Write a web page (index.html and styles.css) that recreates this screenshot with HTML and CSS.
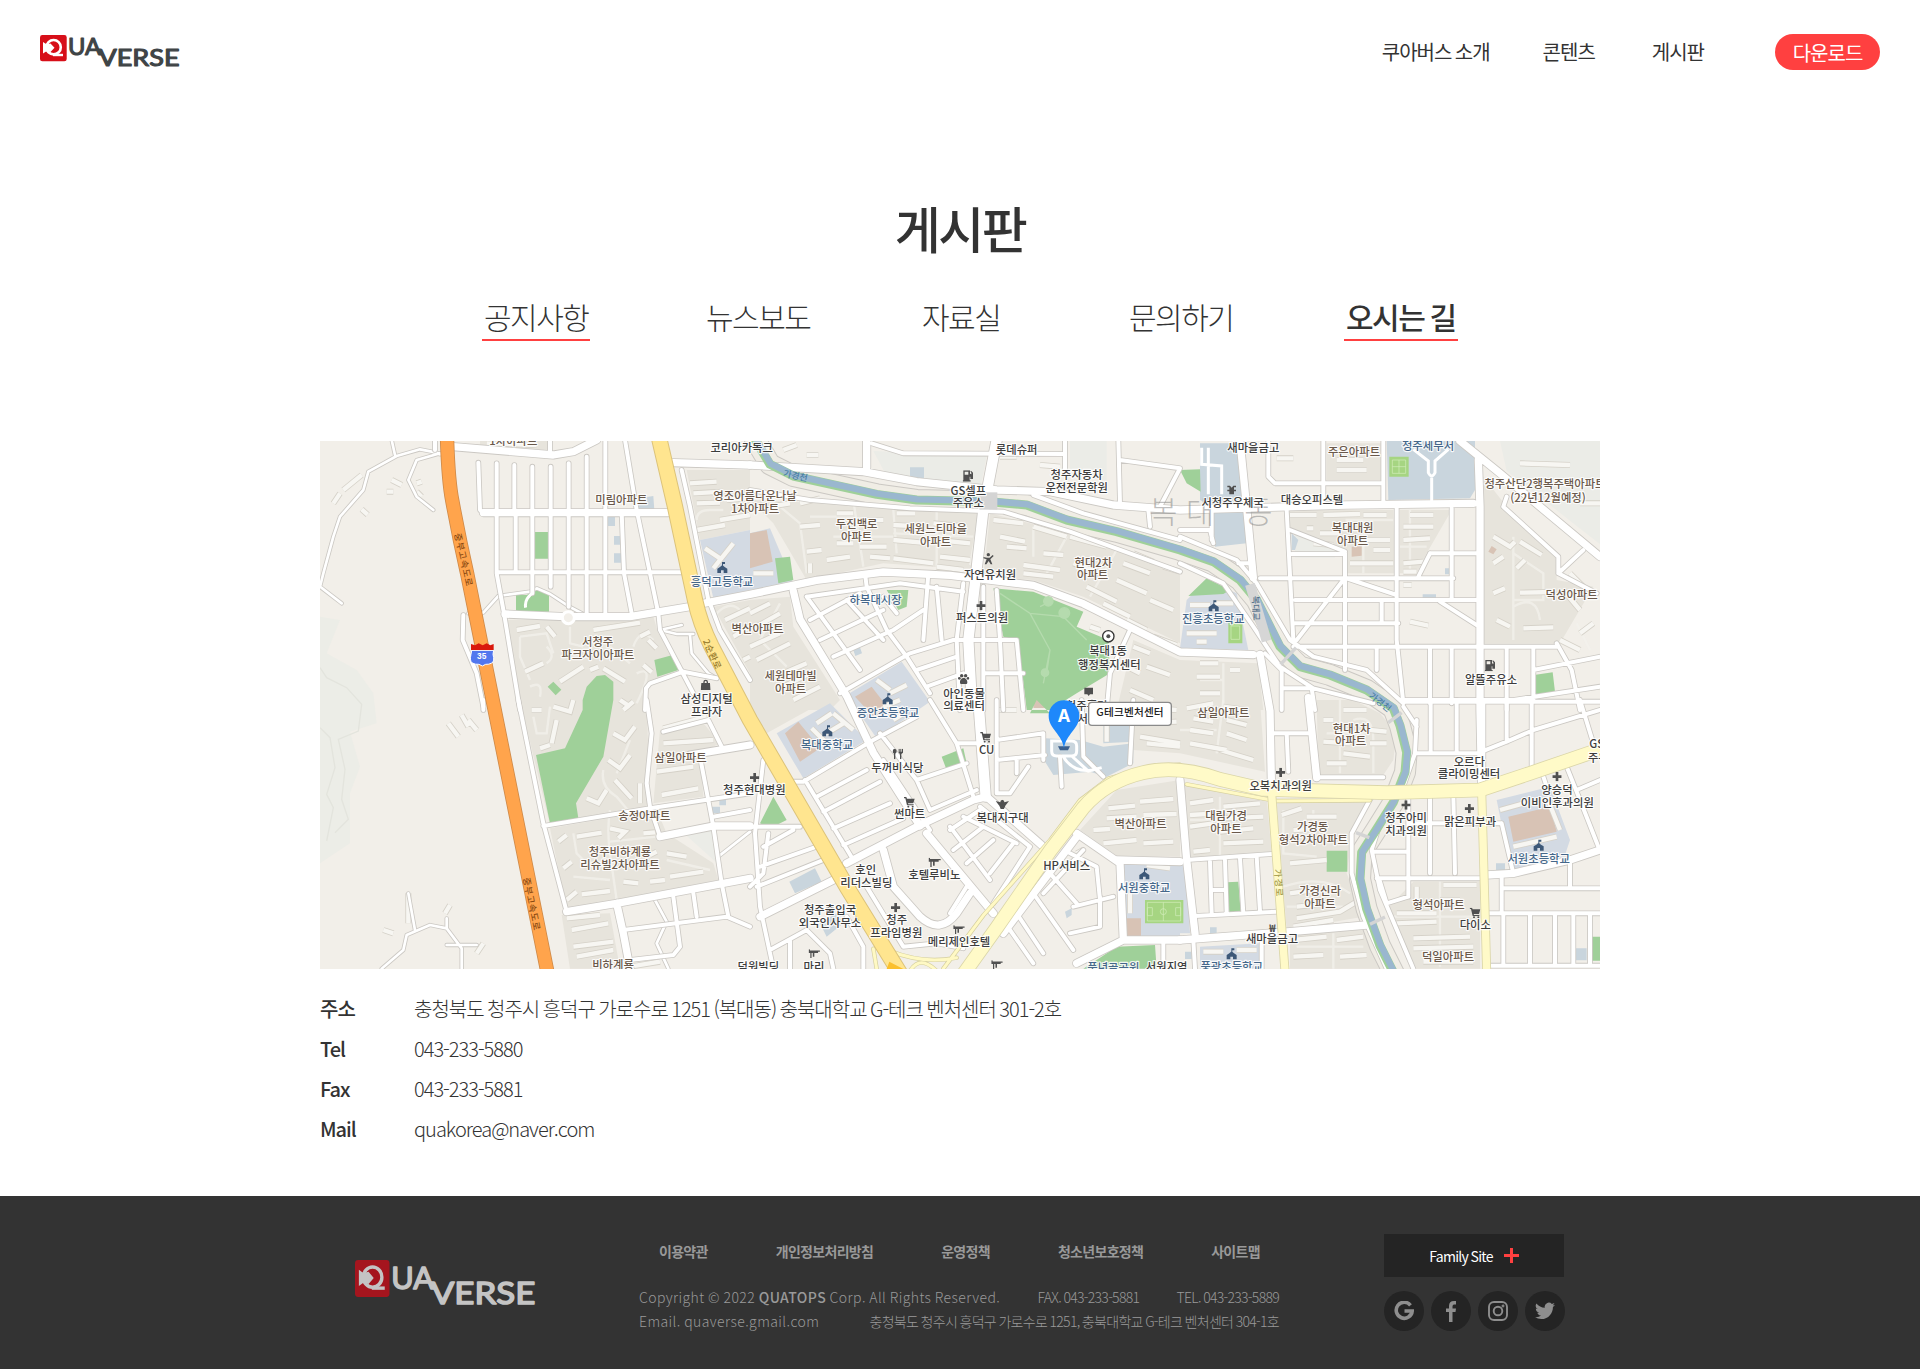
FILE: index.html
```html
<!DOCTYPE html>
<html lang="ko">
<head>
<meta charset="utf-8">
<title>QUAVERSE - 오시는 길</title>
<link rel="stylesheet" href="styles.css">
</head>
<body>
<svg class="sprite" aria-hidden="true">
  <symbol id="logo" viewBox="0 0 140 32" preserveAspectRatio="none">
    <rect class="logo-box" width="26.7" height="26.3" rx="2.4"/>
    <circle class="logo-ring" cx="13.6" cy="12.2" r="7.2"/>
    <path class="logo-line" d="M13 20h10"/>
    <path class="logo-fish" d="M3 7l3.500 2.200 4-.8 4 4.400-4 4.200-4-.8L3 18.500z"/>
    <text class="logo-text" x="28" y="20.300" textLength="33" lengthAdjust="spacingAndGlyphs">UA</text>
    <text class="logo-text" x="58.500" y="31.400" textLength="81" lengthAdjust="spacingAndGlyphs">VERSE</text>
  </symbol>
</svg>

<header class="header">
  <svg class="logo" width="140" height="32"><use href="#logo"/></svg>
  <nav class="gnb">
    <a class="gnb-intro">쿠아버스 소개</a>
    <a class="gnb-contents">콘텐츠</a>
    <a class="gnb-board">게시판</a>
    <a class="download">다운로드</a>
  </nav>
</header>

<main class="main">
  <h1 class="title">게시판</h1>
  <nav class="tabs">
    <a class="tab lined">공지사항</a>
    <a class="tab">뉴스보도</a>
    <a class="tab">자료실</a>
    <a class="tab">문의하기</a>
    <a class="tab lined current">오시는 길</a>
  </nav>

  <svg class="map" viewBox="0 0 3840 1584">
    <defs>
      <symbol id="school" viewBox="0 0 30 34" overflow="visible"><path d="M0 33V20l8-5 7-6 7 6 8 5v13H19v-8h-8v8zM14 0h9v6h-6v6h-3z"/></symbol>
      <symbol id="cross" viewBox="0 0 28 28"><path d="M10 0h8v10h10v8H18v10h-8V18H0v-8h10z"/></symbol>
      <symbol id="cart" viewBox="0 0 32 32"><path d="M0 0h7l2 5h23l-4 14H12l1 3h16v3H9L4 4H0z"/><circle cx="13" cy="29" r="3"/><circle cx="26" cy="29" r="3"/></symbol>
      <symbol id="fuel" viewBox="0 0 32 34"><path d="M2 0h20v10l4 2V7l-3-4 2-2 6 6v19h-8v-7h-2v11h3v4H0v-4h2zM6 4v9h11V4z" fill-rule="evenodd"/></symbol>
      <symbol id="bed" viewBox="0 0 36 28"><path d="M0 0h4v4h32v4h-6v4H18v12h-5V12H9v16H5V12H0z"/></symbol>
      <symbol id="bag" viewBox="0 0 30 32"><path d="M8 11V8a7 7 0 0 1 14 0v3h6l2 21H0l2-21zM12 11h6V8a3 3 0 0 0-6 0z" fill-rule="evenodd"/></symbol>
      <symbol id="paw" viewBox="0 0 34 32"><path d="M17 13c7 0 12 8 11 14s-8 4-11 4-10 2-11-4 4-14 11-14z"/><circle cx="11" cy="6" r="5"/><circle cx="23" cy="6" r="5"/><circle cx="4" cy="14" r="4"/><circle cx="30" cy="14" r="4"/></symbol>
      <symbol id="police" viewBox="0 0 40 30"><path d="M0 4l14 4 1-5 5-3 5 3 1 5 14-4-11 14-4 10h-10L11 18z"/></symbol>
      <symbol id="food" viewBox="0 0 32 32"><path d="M0 8a6 8 0 0 1 12 0c0 5-3 6-4 7v17H4V15C3 14 0 13 0 8zM18 0h3v9h2V0h3v9h2V0h3v12l-5 4v16h-4V16l-4-4z"/></symbol>
      <symbol id="people" viewBox="0 0 32 36"><circle cx="15" cy="5" r="5"/><path d="M0 12l11 2h8l9-8 3 3-10 10 6 15h-5l-6-10-7 10H4l6-15L0 16z"/></symbol>

      <g id="streets">
        <path transform="translate(0 -3)" d="M475 68l5 142 10 8h555M530 70v148M583 75v143M637 80v380M692 80v360M746 70v430M800 50v475M856 0v525M915 0l35 210 40 190 25 120M905 218l7 182 23 120M530 218v182l22 120 48 290M587 218v177M535 397h550M430 525l-2 75 42 100 20 100M1085 90l25 110 55 280M1015 520l5 50 100 190M1090 695l100 20M975 810l3-65 12-15 100-35M1170 490l30 80 90 150M345 0v30M690 0v40"/>
        <path transform="translate(1290 -3)" d="M365 10l95 30 480 2M945 0v90M1105 0l5 190M1110 60l180 25-60 115M1195 210l5 50M0 150l180 30 300 25 280 10 200 60 330 120M850 165l150 55 290 80M345 400l5 40 60 130 60 80 70 110M535 400l-15 200M640 430l-20 170 10 210M170 470l280-40 190 25M180 540l150-80M210 600l190-90M250 650l180-80 90-60M170 470l160 220M270 760l210-120 130-40h190M290 480l110 120M560 440l15 160M500 690l120-40M530 740l110-40M700 440v370M740 450l10 150 10 210M800 600l20 210M700 700h120M400 470l40 50M1140 570l-60 130-10 110"/>
        <path transform="translate(2580 -3)" d="M320 210l20 390M430 0v200M265 0v110l20 20h145M430 130h175M610 0v190M650 205v395l20 190M815 205v275M240 415h580M345 480h555M345 550h310M340 620h790M495 340v350M330 270l165 65M335 342h160M490 420L350 600M500 415l60 20 90 30M750 340l-35 70M750 340h140M605 480v70M780 485l110 70M590 620v70M750 620v170M815 620v170M980 620v190M1060 620v160M1060 690l200-40M1130 610l45 80 25 120M670 780h330l260-40M970 200l165 150v50l75-70M255 640l50 50v120M305 745h90l10 65M0 270h90l10 40M95 200v100M0 370l130 60 90 130 80 120 100 65 180 45M0 290l170 70 60 70 100 170 70 50 160 40 110 100M175 370h35M1135 400l115 60M970 200l10-30"/>
        <path transform="translate(0 777)" d="M595 0l75 370 70 265M670 378l320-53 300-45M980 0l15 100-15 150 10 70 30 90M1140 170l40 210 25 170 20 100M1165 60l45 90M1030 95l135-35M910 690l310-40 70 30M1060 590l20 150-20 25-130 15M1120 580l10 70M1180 350l110-20M490 0v30"/>
        <path transform="translate(1290 777)" d="M40 180L15 400l15 220 40 186M130 245h30l210-125 130-70M165 240l145 240M540 0l80 130 50 160M400 180l140 210M200 290l150-80M220 335l170-90M250 385l170-75M280 435l180-80M390 100l110 140 150-50M500 240l40 90 140-60M740 180l145-15M740 120l140-20M740 0v280h40l55-80M800 180v40M880 100v80M995 0l5 170 60 60M930 170l5 90M1150 0l-10 190M600 380l120 160M640 350l160 80M840 440L730 610M690 320l150 120M720 520l70-90M600 390l90-60M350 560l110 180 100-10 80 15M780 690l70 100M800 640l80 120M850 580l120 170M900 520l80 90M970 620l120-30M960 460l80 40 10 100M880 580l120-130M960 700l90-20V590M0 380h150M55 400L40 520 0 560M40 440l90-50M30 500l170-60M20 560l200-80M60 750l110-60 70 70 10 46M290 650l50 90v66M120 720v86M610 450l90-70M650 490l80-70M530 400l200 240M620 130h80M600 640l50-80M1240 720v80"/>
        <path transform="translate(2580 777)" d="M20 480l255-18M45 648l245-13M40 720l5 86M90 485l5 155M135 480l5 160M180 475l10 165M230 470l10 165M95 570h40M245 700v106M275 100h110M320 100l5 115M410 232h200M670 5h590M710 160h190M752 0v155M830 0v155M910 0v240M1055 0v210M905 155l75-30 80-35 200-60M980 10v115M1200 0l40 130M685 290v300M750 285v235M820 285l5 235M580 455h105M590 535h310M600 545l20 65 65-20M690 370h210M965 370l35 150M920 370h45M1090 230l10 30M1160 200l40 100 55 140M1190 270l70-30M965 525v115M1170 480v80M965 565h295M925 640h335M970 640v155M1050 640v155M1125 640v155M1180 640v155M1230 640v155M925 797h335M580 280l-65 120v120l35 130 70 156M710 60l-5 100-35 100-70 110-25 80 25 120 100 236M670 20l40 60"/>
      </g>
      <g id="avenues">
        <path transform="translate(0 -3)" d="M400 20l300 25 60-10 70-35M1060 68l230 7M555 522l180 8h195l180-30M490 218h555"/>
        <path d="M1150 487l140-27 200-42 200-25 200 10 250 30 150 55 290 145 220 8M1290 72l340 20 160 30 240 25 160 5 190 40 200 15 500-15 380-5M1640 0v80M2760 0l20 200 20 210M3475 57l5 140v610l5 240M3420 0l120 97 300 250M2820 640l30 170 5 260M2965 770l25 240M1420 450l20 85 140 230 80 170 140 220"/>
        <path transform="translate(0 777)" d="M740 635l150-25 400-75M890 610l20 90 20 106M1020 410l160-32h110M1110 165l180-30"/>
        <path transform="translate(1290 777)" d="M710 290l170 150M290 490l210-110 170-80 40-10M400 450l30 110 80 90q60 55 110-10l40-60M30 650l240-120M530 400l200 240M760 700l220-290M980 400l130 90 10 230-140 70M1120 720h170M1100 480l190 5"/>
        <path transform="translate(2580 777)" d="M0 240l20 240 25 220M0 720l330-25 230-20M920 525l80-5 170-40 90-30"/>
      </g>
      <path id="trunk" d="M2030-3l-40 210-25 220-20 170 10 180h20l22 290"/>
      <path id="lanes" d="M360 37l-70 20-25 60 25 50 50 40M0 437l10-40 30-110 20-60 70-80 15-55 85-47 70-20 50 10 10 5M0 437l65 50M225 42L215-3M445 517l45-2 45-50 95-13 20-10 40 17 58 38 47 25M1020 567l65-15M1020 567l50 12h50M1110 582l5 55 50 60 25 15M1005 1377l35 65-30 65 35 76M1195 1247l95-75M185 1583l65-56 10-45 70-30 50 10 45 60v61M285 1467l-20-110M380 1512h90M380 1462v-30"/>
      <path id="river" d="M1305-5l45 75 70 35 250 55 120 17 220 5 110 10 120 45 150 35 190 55 100 35 80 55 50 60 30 60 40 80 60 60 90 25 110 45 80 55 20 52 20 80-5 60-35 90-50 80-45 70-5 80 20 90 40 110 60 120"/>
      <path id="ramps" d="M1870 1583l120-160 200-225 90-120 85-65 125-35 90-7M1710 1530q100 40 200 20M1770 1590q30-50 80 0M2600 1030l270 50 280-2M1670 1583l-10-60"/>
      <path id="county" d="M1930 1600l100-140 160-230 100-130q70-80 180-105 100-25 230 20l130 30 370 10 280-8 150-50 220-75"/>
      <path id="county-branch" d="M2855 1060l40 530M3485 1050l15 540"/>
      <path id="national" d="M1017-10l48 207 60 280q15 70 50 140l115 220 290 500 160 260"/>
      <path id="highway" d="M381-10q4 130 16 190 20 110 45 220l76 377 165 820"/>

      <g id="blocks">
        <path transform="translate(0 -3)" d="M70 150l55-45M40 190l20-30M125 208l18 16M200 155h20M215 120l30 15M590 570l70-12M680 560l25 30M820 570l140-22M960 590l30-15M985 600l25 25M720 725l70-45M810 690l25-10M850 685l65 40M615 695l55-25M970 675l25 22M910 810l30-25M1110 130l80-5M1120 160l90-5M1130 190l70-2M1130 270l85-15M1200 240l90-15M1220 180l60-5M1215 540l75-35M1240 590l50-30M1270 660l20-10M290 130l15-5M290 155l15 15M500 10l150 5M1155 325l45 30M1180 385l60-75"/>
        <path transform="translate(1290 -3)" d="M100 30l40-15M170 45h35M60 200l60-10M150 190l60-15M150 260l60-5M170 335l45-5M180 370v30M230 360l70-10M260 220h50M340 240h60M260 310h50M330 320h80M440 220h55M430 255l90 5M430 300l110 10M550 250l100 10M560 300l100 10M360 350l60 5M430 355l120 15M570 350l90 10M560 380l80 10M750 50h50M870 75l60 5M850 260l100 30M960 290l110 30M730 240l90 10M750 290l75 15M770 320l60 5M820 375l110 15M820 400l90 10M880 340l60 5M970 370l80 30M1010 440l90 45M1120 370l80 30M1150 340l60 25M1240 380l50 15M1100 420l90 40M1060 490l80 40M1130 540l60 30M1200 480l70 30M1210 590l70 25M0 520l60-30M20 560l70-40M0 620l90-40M20 660l100-50M100 700l70-30M100 740l80-40M130 780l80-40M1150 620l50 20M1190 680l70 25M1130 680l40 20M1140 750l70 30M10 400h60M420 760l50-25M380 720l40 30M1020 560l30 10"/>
        <path transform="translate(2580 -3)" d="M330 225h80M430 225l110-3M550 225h70M420 280h60M400 310l60 5M510 300h40M560 300h70M580 330h50M510 370h130M690 225h70M670 260h90M670 300l80-5M670 370l60-5M670 395h40M290 55h50M470 60h80M470 90h90M940 290l50 30 15-15M940 370l30-20M940 460l35-15M950 540l40 20M1020 305l65 40M1010 385l25-25M1020 458l100-2M1150 450l50 60M1030 565l90-3M1140 600l60 30M1170 400l40 40M1200 580l40-30M690 545l55 12M60 670h55M50 710h70M60 760h60M150 690h30M30 495h60M100 490h60M20 580h90M50 605h30M1020 70l150 5M1200 190h60M670 435h25M380 265h20"/>
        <path transform="translate(0 777)" d="M635 30h30M700 20l50 15 10-35M710 60l-15 70M660 145l30-10M880 100l35 20 30-40M865 180l35 25 30-40M800 295l35 15 25-40M885 240l50 55M960 250v60M900 0l30 20M1030 85l130-35M1030 130l150-10M1010 215l110-15M1025 285l110-20M715 425l25-20M770 410l75-12M730 505l25-20M740 600l30-25M785 583l85-10M870 385l45 10-20 20M970 400l35-3M990 545l45-5M1050 530l100-15M1040 460l60 10M910 545l45 5M990 465l20-10M740 655l100-10M755 690l110-20M760 740l120-15M770 770l110-20M385 70l30 40M425 45l20 35M445 60l25 30M265 580v90M190 690l30 10M470 760l20-30M375 640l15-25M930 800l90-15"/>
        <path transform="translate(1290 777)" d="M185 85l60 60M250 40l60 50M200 70l45-30M230 100l50-30M400 20l50-20M430 60l40-25M1075 325l80-8M1170 305l100-8M1070 355l90-5M1180 345l100-3M1030 390l50-3M1060 430l100-10M1180 430l90-5M1070 125V60M1150 20l130 10M1170 70l110-5M1170 110l120 20M1190 130l100 10M1140 580v60M1190 495l70 10M740 30h60M980 460l20-10"/>
        <path transform="translate(2580 777)" d="M20 25l80-15M40 55l60 10M30 90l70 10M30 130l110 20M130 20l70 10M140 60l60 15M140 100l60 20M120 150l100 30M430 60h30M490 30h70M430 125l80 5M490 160l80 10M570 90l50 5M570 130h50M440 190h60M30 310l70-10M30 345l80-5M130 320l110-10M130 355l120-5M120 395l100-10M30 380l70-10M130 430l120-5M40 455l50-5M305 345l60-20M380 350h90M340 390l100-5M330 490l110-10M330 580l70-10M350 655l130-20 50-30M350 620l100-10M340 680l120-20M710 560v40M650 640h120M650 670l120-5M790 555h100M780 600h60M700 715l170-5M700 745l180-5M730 785h150M960 330l90-25M1000 440l130-30M1100 290l40 100M340 720l100-10M470 720l80-10M340 770l90-5M480 770l80-5M70 755h60M170 750h60M570 610l-20-40"/>
      </g>
    </defs>

    <rect class="land" width="3840" height="1584"/>

    <path class="hill" d="M0 527l60 10-40 100 90 50 50 70 10 90-80 25 30 105-30 80v150l-90 60z"/>
    <path class="contour" d="M0 680l20 30 60 30 45 50-10 80-60 25 20 90-10 90 20 60-40 40M0 860l30 30 15 90-25 80 20 40-20 100"/>

    <g class="estate">
      <path transform="translate(0 -3)" d="M560 540l440-10 15 50 75 115-115 40v75H595zM480 0h210v30l-210-10zM1100 90h190v180l-150 30zM1180 500l110-20v220z"/>
      <path transform="translate(1290 -3)" d="M0 180l700 30-20 180-280-20-230 50-100-170zM720 220l240 60 330 120v210l-290-140-150-50-150-10zM0 480l120-10 10 90 140 220-30 30H0zM1150 600l140 60v150h-190z"/>
      <path transform="translate(2580 -3)" d="M325 210h315l5 190H500v-70l-170-60zM660 210h155l-75 130-30 60h-50zM910 110l70 90 150 140v80l110 20-100 170H910zM440 10h165v110H440zM0 660l235 10 15 140H0z"/>
      <path transform="translate(0 777)" d="M600 0h380l10 320-300 55zM690 385l320-55 30 70 140 90 15 50-455 90zM725 645l145-5 30 166H750zM1020 90l130-20 50 60-60 30 10 130-150 20z"/>
      <path transform="translate(1290 777)" d="M990 390l110-120 190-30v230h-190zM0 0h230L50 100 0 30zM1150 0h140v160l-140-10z"/>
      <path transform="translate(2580 777)" d="M0 0h240l15 215L0 160zM410 0h110l80 40 50 60-10 80-30 45H415zM0 250l260 45 15 165-255 15zM290 310l270-10-40 80-20 140 50 130-230 40zM700 545h200v261H710l-90-180zM330 700l230-20 50 126H330z"/>
    </g>
    <path class="pale" d="M1660 30l340 15-20 100-280-40zM3540 0h300v310L3560 90zM2925 280l120 50v20h-120zM1090 1175l90-20 10 110zM2250 0v90l110 30V0z"/>
    <g class="campus">
      <path transform="translate(0 -3)" d="M1140 300l150-30v180l-110 25z"/>
      <path transform="translate(1290 -3)" d="M0 280l60-15 70 165-130 20zM290 765l165-100 85 120-160 110z"/>
      <path transform="translate(2580 -3)" d="M20 480l60-60 90 40 35 170-205-5z"/>
      <path transform="translate(1290 777)" d="M80 100l160-90 110 110-190 115zM1110 490l180-10v230h-170z"/>
      <path transform="translate(2580 777)" d="M950 300l160-40 60 160-20 60-150 40-30-120zM60 740l180-10 10 76H60zM0 490h18l12 210H0z"/>
    </g>
    <g class="public">
      <path transform="translate(0 -3)" d="M860 230h25v28h-25zM882 288h22v26h-22zM882 340h22v28h-22zM955 175l45-7 3 42h-48z"/>
      <path transform="translate(1290 -3)" d="M480 82h42v40h-42zM310 630l20-8 6 18-20 8z"/>
      <path transform="translate(2580 -3)" d="M60 10h115l15 170 10 130-95 10-10-120-35-20zM620 0h265v150l-15 25-245 5zM335 280l20 20-10 30h-10zM795 385h15v18h-15zM728 463h40v14h-40z"/>
      <path transform="translate(1290 777)" d="M118 545l77-40 20 40-80 35zM885 115l105 5 70 20 90-10v60l-80 40-50-15-110 10-25-40zM1060 50l90 10v65l-90 5zM945 635l20-10v20l-15 10zM210 670l50-30 20 30-50 40z"/>
      <path transform="translate(2580 777)" d="M948 490h27v30h-27zM1188 745h32v36h-32zM90 682h20v20H90zM15 755h20v22H15z"/>
      <path d="M1198 1068h20v25h-20zM1175 1097h25v20h-25z"/>
    </g>
    <g class="gym">
      <path transform="translate(1290 -3)" d="M0 280l50-10 18 95-68 20zM315 770l50-30 50 65-40 30zM850 768l60-4v40h-60z"/>
      <path transform="translate(2580 -3)" d="M515 320l30-3v30l-30 3zM935 318l15 10-10 15-15-8z"/>
      <path transform="translate(1290 777)" d="M105 100l40-35 65 80-60 40zM1125 655h48v55h-48z"/>
      <path transform="translate(2580 777)" d="M985 350l125-30 20 75-130 30z"/>
    </g>
    <g class="park">
      <path transform="translate(0 -3)" d="M645 276h43v80h-43zM588 465h32l25-15 42 10v55h-99zM1003 660l55-15 17 45-63 20zM683 740l17-15 24 24-17 17z"/>
      <path d="M788 777l12-40 30-32 25-3 25 20v55l-30 170-82 140 7 45-85 15-42-205 87-20 53-115z"/>
      <path transform="translate(1290 -3)" d="M75 355l45-5 10 70-45 10zM410 450h65l-5 50-25 10zM730 445l120 10 150 60-20 45 95 40 5 100-100 60-80 50h-70l-25-210-45-10zM860 780l-20 40h60z"/>
      <path transform="translate(2580 -3)" d="M0 90l60-2 2 67-42-25zM25 468l55-53 70 35-20 12zM1062 705l56-8 7 58-63 10z"/>
      <path transform="translate(1290 777)" d="M575 170l65-25 10 45-60 20zM70 290l40 70-50 25-30-15zM1000 806l100-66 115-5 5 71z"/>
      <path transform="translate(2580 777)" d="M440 452h62v63h-62zM140 547l35-2 7 90-34 3zM1235 710h25v72h-25z"/>
    </g>
    <path class="pitch" d="M3208 47h58v60h-58zM2725 542h42v65h-42zM2475 1377h115v70h-115z"/>
    <g class="pitch-line">
      <path d="M3217 57h40v40h-40zM3237 57v40M3217 77h40M2733 555h26v40h-26zM2482 1384h100v56h-100zM2530 1384v56M2482 1400h15v24h-15zM2567 1400h15v24h-15z"/><circle cx="2530" cy="1412" r="9"/>
    </g>
    <g class="park-path">
      <path d="M2040 457l90 60 100 10 70 70M2130 517l60 110-20 100M2190 627l-10 70M2160 497l20-10"/><circle cx="2185" cy="481" r="14"/><circle cx="2233" cy="516" r="16"/><circle cx="2175" cy="695" r="11"/>
    </g>
    <g class="trail">
      <path transform="translate(0 -3)" d="M600 590l80-10 20 60M600 590v60l30 70M680 620q30 30 0 50M630 740q40-20 30 30M750 560v50l40 10M940 620q20-60 60-20M950 700q60-30 0 90M870 620l60 50M1130 240q0-30 40-30h40M1190 520q40-40 70-10"/>
      <path transform="translate(0 777)" d="M690 20l-10 80h-30l-10-50M850 210q-10 50 40 80l50 60M870 330q-10 60 0 130l20 140M760 400l10 60 30 30 80-10M870 425l140-15M760 530l110 10M1040 480l130 30M930 120l-40 100"/>
      <path transform="translate(1290 -3)" d="M310 180l30 200M90 200l60 50 20 150M430 210l10 130M560 210v170M690 215l-30 160M850 260v90M950 290l-60 110M1100 330l-80 140M250 290h180M180 230h130M430 280l240 10M90 490l-60 110 80 80"/>
      <path transform="translate(2580 -3)" d="M500 260v-20h140M550 240v160M690 210v190M660 320h80M1000 290v310M1000 340l90 60v80h-90M1000 500q70-40 80 40M130 670v140M60 720h70M1190 550l40 80"/>
      <path transform="translate(2580 777)" d="M130 0l-20 160M0 90h110M480 0v220M440 100h130M520 60q60-20 60 60v100M120 290v180M30 360h90M310 330v130l100 10M400 330v60M310 560q120-40 200 20M320 620h170M780 540v260M640 650h240M460 700v106M350 740h200"/>
    </g>

    <use class="block-edge" href="#blocks"/>
    <use class="block" href="#blocks"/>

    <use class="line bank-edge" href="#river"/>
    <use class="line bank" href="#river"/>

    <use class="line country-edge" href="#lanes"/>
    <use class="line country" href="#lanes"/>
    <use class="line street-edge" href="#streets"/>
    <use class="line avenue-edge" href="#avenues"/>
    <use class="line trunk-edge" href="#trunk"/>
    <use class="line street" href="#streets"/>
    <use class="line avenue" href="#avenues"/>
    <use class="line trunk" href="#trunk"/>
    <circle class="roundabout" cx="745" cy="530" r="18"/>
    <path class="street-lot" d="M617 500q-5-25 22-45M2195 900h60q15 0 15 15v15q0 15-15 15h-45q-15 0-15-15zM2255 945l50 45 40-10M2230 947q30 50 90 40M3280 25l45 35v35q10 20 20 0V60l40-35M3335 110v70M2645 20v50l60 5v85M2665 20v140"/>

    <use class="line shore" href="#river"/>
    <use class="line river" href="#river" x="2" y="-2"/>
    <path class="bridge" d="M2882 670l46-50M3205 845l40-30M3108 1175l40 15M3150 1450l45-22"/>
    <path class="overpass" d="M1978 180h54"/>
    <path class="bridge-deck" d="M2790 430l50 170"/>

    <use class="line ramp-edge" href="#ramps"/>
    <use class="line ramp" href="#ramps"/>
    <use class="line branch-edge" href="#county-branch"/>
    <use class="line county-edge" href="#county"/>
    <use class="line branch" href="#county-branch"/>
    <use class="line county" href="#county"/>
    <use class="line national-edge" href="#national"/>
    <use class="line national" href="#national"/>
    <use class="line highway-edge" href="#highway"/>
    <use class="line highway" href="#highway"/>
    <path class="national-mark" d="M1700 1584l8-22 42 22z"/>

    <g class="watermark"><text x="2530" y="246">복</text><text x="2640" y="246">대</text><text x="2815" y="246">동</text></g>

    <g class="label estate-name">
      <text x="580" y="13">1차아파트</text><text x="904" y="189">미림아파트</text>
      <text x="833" y="615">서청주</text><text x="834" y="653">파크자이아파트</text>
      <text x="1305" y="177">영조아름다운나날</text><text x="1305" y="215">1차아파트</text>
      <text x="1610" y="260">두진백로</text><text x="1610" y="299">아파트</text>
      <text x="1847" y="277">세원느티마을</text><text x="1847" y="316">아파트</text>
      <text x="2320" y="378">현대2차</text><text x="2318" y="415">아파트</text>
      <text x="1313" y="575">벽산아파트</text>
      <text x="1412" y="718">세원테마빌</text><text x="1412" y="756">아파트</text>
      <text x="3102" y="46">주은아파트</text>
      <text x="3098" y="273">복대대원</text><text x="3098" y="311">아파트</text>
      <text x="3675" y="142">청주산단2행복주택아파트</text><text x="3684" y="184">(22년12월예정)</text>
      <text x="3755" y="473">덕성아파트</text>
      <text x="1082" y="963">삼일아파트</text><text x="973" y="1136">송정아파트</text>
      <text x="900" y="1244">청주비하계룡</text><text x="900" y="1284">리슈빌2차아파트</text><text x="879" y="1583">비하계룡</text>
      <text x="2462" y="1160">벽산아파트</text>
      <text x="2710" y="828">삼일아파트</text>
      <text x="3095" y="875">현대1차</text><text x="3092" y="912">아파트</text>
      <text x="2718" y="1138">대림가경</text><text x="2718" y="1176">아파트</text>
      <text x="2978" y="1170">가경동</text><text x="2980" y="1208">형석2차아파트</text>
      <text x="3000" y="1363">가경신라</text><text x="3000" y="1401">아파트</text>
      <text x="3356" y="1405">형석아파트</text><text x="3384" y="1559">덕일아파트</text>
    </g>
    <g class="label school-name">
      <text x="1206" y="434">흥덕고등학교</text><text x="1667" y="488">하복대시장</text>
      <text x="1704" y="827">증안초등학교</text><text x="1521" y="925">복대중학교</text>
      <text x="2680" y="547">진흥초등학교</text><text x="3324" y="26">청주세무서</text>
      <text x="2472" y="1354">서원중학교</text><text x="3656" y="1265">서원초등학교</text><text x="2735" y="1590">풍광초등학교</text>
      <text x="2380" y="1592">풍년골공원</text>
    </g>
    <g class="label poi-name">
      <text x="1265" y="32">코리아카독크</text><text x="2090" y="38">롯데슈퍼</text>
      <text x="2270" y="115">청주자동차</text><text x="2270" y="154">운전전문학원</text>
      <text x="1945" y="161">GS셀프</text><text x="1945" y="199">주유소</text>
      <text x="2010" y="413">자연유치원</text><text x="1986" y="544">퍼스트의원</text>
      <text x="2364" y="641">복대1동</text><text x="2368" y="684">행정복지센터</text>
      <text x="2800" y="32">새마을금고</text><text x="2738" y="199">서청주우체국</text><text x="2976" y="190">대승오피스텔</text>
      <text x="3513" y="728">알뜰주유소</text>
      <text x="1160" y="786">삼성디지털</text><text x="1160" y="824">프라자</text>
      <text x="1932" y="770">아인동물</text><text x="1932" y="808">의료센터</text>
      <text x="2000" y="940">CU</text><text x="1732" y="993">두꺼비식당</text>
      <text x="1303" y="1059">청주현대병원</text><text x="1769" y="1132">썬마트</text><text x="2048" y="1144">복대지구대</text>
      <text x="1637" y="1299">호인</text><text x="1639" y="1338">리더스빌딩</text><text x="1843" y="1313">호텔루비노</text>
      <text x="2240" y="1287">HP서비스</text>
      <text x="1530" y="1419">청주출입국</text><text x="1530" y="1458">외국인사무소</text>
      <text x="1730" y="1448">청주</text><text x="1729" y="1488">프라임병원</text><text x="1917" y="1515">메리제인호텔</text>
      <text x="1482" y="1590">마리</text><text x="1315" y="1590">덕원빌딩</text><text x="2540" y="1590">서원지역</text>
      <text x="2300" y="806">청주흥덕</text><text x="2288" y="847">도서관</text>
      <text x="2882" y="1046">오복치과의원</text><text x="3448" y="974">오르다</text><text x="3447" y="1012">클라이밍센터</text>
      <text x="3258" y="1143">청주아미</text><text x="3258" y="1181">치과의원</text><text x="3450" y="1154">맑은피부과</text>
      <text x="3711" y="1059">양승덕</text><text x="3712" y="1097">이비인후과의원</text>
      <text x="3466" y="1464">다이소</text><text x="2856" y="1507">새마을금고</text>
      <text x="3830" y="922">GS</text><text x="3835" y="962">주유</text>
    </g>
    <g class="poi-icon">
      <use href="#fuel" x="1928" y="88" width="32" height="34"/><use href="#people" x="1990" y="336" width="32" height="36"/>
      <use href="#cross" x="1969" y="480" width="28" height="28"/><use href="#bag" x="1142" y="715" width="30" height="32"/>
      <use href="#paw" x="1914" y="698" width="34" height="32"/><use href="#cart" x="1980" y="873" width="34" height="32"/>
      <use href="#food" x="1717" y="923" width="34" height="32"/><use href="#cross" x="1290" y="996" width="28" height="28"/>
      <use href="#cart" x="1751" y="1068" width="34" height="32"/><use href="#police" x="2027" y="1076" width="40" height="30"/>
      <use href="#bed" x="1825" y="1250" width="38" height="28"/><use href="#cross" x="1713" y="1386" width="28" height="28"/>
      <use href="#bed" x="1898" y="1453" width="38" height="26"/><use href="#bed" x="1465" y="1525" width="36" height="26"/><use href="#bed" x="2013" y="1558" width="36" height="26"/>
      <use href="#cross" x="2868" y="980" width="28" height="28"/><use href="#cross" x="3244" y="1078" width="28" height="28"/>
      <use href="#cross" x="3434" y="1089" width="28" height="28"/><use href="#cross" x="3697" y="993" width="28" height="28"/>
      <use href="#cart" x="3449" y="1400" width="32" height="32"/><use href="#fuel" x="3494" y="657" width="32" height="34"/>
      <path d="M2722 134h8l5 6 5-6h8v5h-6v7h6v5h-6v9h-14v-9h-6v-5h6v-7h-6zM2293 740h26v20h-9l-4 5-4-5h-9z"/>
      <circle class="office" cx="2365" cy="586" r="17"/><circle cx="2365" cy="586" r="6"/>
      <text class="won" x="2857" y="1472">₩</text>
    </g>
    <g class="school-icon">
      <use href="#school" x="1192" y="363" width="30" height="34"/><use href="#school" x="1688" y="757" width="30" height="34"/>
      <use href="#school" x="1507" y="853" width="30" height="34"/><use href="#school" x="2666" y="478" width="30" height="34"/>
      <use href="#school" x="2458" y="1282" width="30" height="34"/><use href="#school" x="3641" y="1196" width="30" height="34"/>
      <use href="#school" x="2720" y="1522" width="30" height="34"/>
    </g>
    <g class="road-name">
      <text class="on-highway" transform="translate(403 279) rotate(77)" textLength="162">중부고속도로</text>
      <text class="on-highway" transform="translate(609 1312) rotate(78)" textLength="160">중부고속도로</text>
      <text class="on-national" transform="translate(1148 600) rotate(66)" textLength="95">2순환로</text>
      <text class="on-county" transform="translate(2863 1285) rotate(86)" textLength="82">가경로</text>
      <text class="on-river" transform="translate(1388 106) rotate(12)">가경천</text>
      <text class="on-river" transform="translate(3145 768) rotate(38)">가경천</text>
      <text class="on-bridge" transform="translate(2797 465) rotate(88)">복대교</text>
    </g>
    <g class="shield">
      <path class="shield-body" d="M455 628h66l-2 12q6 22-4 26-8 5-18 4l-10 5-10-5q-12 1-20-4-9-6-4-26z"/>
      <path class="shield-top" d="M453 609l12 4 11-6 12 6 12-6 11 6 10-4v18h-68z"/>
      <text x="485" y="653">35</text>
    </g>
    <g class="marker">
      <path class="pin-base" d="M2214 916h36l-6 12h-24z"/>
      <path class="pin" d="M2232 922c-6-44-46-58-46-98a46 46 0 0 1 92 0c0 40-40 54-46 98z"/>
      <text class="pin-text" x="2232" y="844">A</text>
      <rect class="tip-box" x="2306" y="784" width="248" height="69" rx="10"/>
      <text class="tip-text" x="2430" y="826" textLength="202">G테크벤처센터</text>
    </g>
  </svg>

  <dl class="info">
    <dt>주소</dt><dd>충청북도 청주시 흥덕구 가로수로 1251 (복대동) 충북대학교 G-테크 벤처센터 301-2호</dd>
    <dt>Tel</dt><dd>043-233-5880</dd>
    <dt>Fax</dt><dd>043-233-5881</dd>
    <dt>Mail</dt><dd>quakorea@naver.com</dd>
  </dl>
</main>

<footer class="footer">
  <svg class="footer-logo" width="181" height="45"><use href="#logo"/></svg>
  <div class="footer-info">
    <nav class="policy"><a>이용약관</a><a>개인정보처리방침</a><a>운영정책</a><a>청소년보호정책</a><a>사이트맵</a></nav>
    <div class="row"><span class="spaced">Copyright © 2022 <b>QUATOPS</b> Corp. All Rights Reserved.</span><span>FAX. 043-233-5881</span><span>TEL. 043-233-5889</span></div>
    <div class="row"><span class="spaced">Email. quaverse.gmail.com</span><span>충청북도 청주시 흥덕구 가로수로 1251, 충북대학교 G-테크 벤처센터 304-1호</span></div>
  </div>
  <div class="footer-side">
    <div class="family">Family Site<i class="plus"></i></div>
    <div class="social">
      <a><svg width="20" height="20" viewBox="0 0 20 20"><path d="M16.500 4.300A8 8 0 1 0 18.200 10H10.500" fill="none" stroke="#8e8e8e" stroke-width="3.600"/></svg></a>
      <a><svg width="20" height="22" viewBox="0 0 20 22"><path d="M8 22V12H5V8.500h3V6q0-5 5-5h2v3.500h-2q-1.500 0-1.500 2v2H15l-.5 3.500h-3v10z" fill="#8e8e8e"/></svg></a>
      <a><svg width="20" height="20" viewBox="0 0 20 20" fill="none" stroke="#8e8e8e" stroke-width="1.900"><rect x="1" y="1" width="18" height="18" rx="5"/><circle cx="10" cy="10" r="4.300"/><circle cx="15" cy="5" r=".5"/></svg></a>
      <a><svg width="20" height="18" viewBox="0 0 24 20"><path fill="#8e8e8e" d="M24 2.400a10 10 0 0 1-2.800.8A5 5 0 0 0 23.300.5a10 10 0 0 1-3.100 1.200 4.900 4.900 0 0 0-8.400 4.500A14 14 0 0 1 1.700 1a4.900 4.900 0 0 0 1.500 6.600A5 5 0 0 1 1 7v.1a4.900 4.900 0 0 0 4 4.800 5 5 0 0 1-2.200.1 4.900 4.900 0 0 0 4.600 3.400A9.900 9.900 0 0 1 0 17.500 14 14 0 0 0 7.500 19.700c9 0 14-7.500 14-14v-.6A10 10 0 0 0 24 2.400z"/></svg></a>
    </div>
  </div>
</footer>
</body>
</html>
```

FILE: styles.css
```css
* {
  box-sizing: border-box;
  margin: 0;
  padding: 0;
  letter-spacing: -0.05em;
  word-spacing: -0.06em;
}
body {
  min-height: 1369px;
  display: flex;
  flex-direction: column;
  font-family: "Noto Sans CJK KR", "Noto Sans", sans-serif;
  color: #333;
  background: #fff;
}
.sprite { display: none; }

.header {
  height: 104px;
  padding: 0 40px;
  display: flex;
  justify-content: space-between;
  align-items: flex-start;
}
.logo { margin-top: 35px; --box: #d70f19; --ink: #3f4446; --mark: #fff; }
.logo-box { fill: var(--box); }
.logo-ring { fill: none; stroke: var(--mark); stroke-width: 2.6; }
.logo-line { stroke: var(--mark); stroke-width: 2.4; }
.logo-fish { fill: var(--mark); }
.logo-text {
  font: 400 22.4px Lato, sans-serif;
  letter-spacing: 0;
  fill: var(--ink);
  stroke: var(--ink);
  stroke-width: 1.1;
  stroke-linejoin: round;
}
.gnb { display: flex; align-items: center; height: 104px; font-size: 20px; line-height: 30px; }
.gnb-intro { margin-right: 53px; }
.gnb-contents { margin-right: 57px; }
.gnb-board { margin-right: 71px; }
.download {
  width: 105px;
  height: 36px;
  line-height: 37px;
  border-radius: 18px;
  text-align: center;
  color: #fff;
  background: #ff4040;
}

.main { width: 1280px; margin: 0 auto; flex: 1; }
.title { margin-top: 88px; text-align: center; font-size: 50px; line-height: 70px; font-weight: 500; }
.tabs {
  display: grid;
  grid-template-columns: 222px 216px 207px 217px auto;
  justify-items: start;
  margin: 34px 0 0 162px;
  font-size: 30px;
  line-height: 41px;
  font-weight: 300;
}
.tab { padding: 0 2px; height: 45px; }
.lined { border-bottom: 2px solid #ff4040; }
.current { font-weight: 500; }
.map { display: block; width: 1280px; height: 528px; margin-top: 100px; }
.map * { letter-spacing: 0; word-spacing: 0; }

.info {
  display: grid;
  grid-template-columns: 94px 1fr;
  grid-auto-rows: 40px;
  margin-top: 20px;
  font-size: 20px;
  line-height: 40px;
}
.info dt { font-weight: 500; }
.info dd { font-weight: 300; }

.footer {
  height: 173px;
  padding: 38px 356px 0 355px;
  display: flex;
  background: #333;
  color: #999;
}
.footer-logo { margin: 26px 103px 0 0; --box: #a5151e; --ink: #c4c4c4; --mark: #c4c4c4; }
.footer-info { width: 640px; font-size: 14px; font-weight: 300; }
.policy { display: flex; gap: 68px; margin: 7px 0 23px 20px; line-height: 21px; font-weight: 700; }
.row { display: flex; justify-content: space-between; line-height: 24px; }
.spaced, .spaced b { letter-spacing: 0.03em; }
.row b { font-weight: 500; }
.footer-side { width: 180px; margin-left: auto; }
.family {
  display: flex;
  justify-content: center;
  align-items: center;
  gap: 11px;
  height: 43px;
  font-size: 14px;
  color: #fff;
  background: #242424;
}
.plus {
  width: 15px;
  height: 15px;
  background:
    linear-gradient(#ff4040, #ff4040) center / 15px 3px no-repeat,
    linear-gradient(#ff4040, #ff4040) center / 3px 15px no-repeat;
}
.social { display: flex; gap: 7px; margin-top: 14px; }
.social a {
  flex: 0 0 40px;
  height: 40px;
  border-radius: 50%;
  display: flex;
  justify-content: center;
  align-items: center;
  background: #242424;
}

/* map surface */
.land { fill: #f2efe9; }
.hill { fill: #ecede7; }
.contour { fill: none; stroke: #e3e4dd; stroke-width: 4; }
.estate { fill: #e7e4dc; }
.pale { fill: #ebece7; }
.campus { fill: #d3dae3; }
.public { fill: #c9d5dd; }
.gym { fill: #d8c3b5; }
.park { fill: #9fd099; }
.park-path { fill: none; stroke: #b5dbae; stroke-width: 4; }
.park-path circle { fill: #b5dbae; }
.pitch { fill: #a6d582; }
.pitch-line { fill: none; stroke: #d4efbe; stroke-width: 2; }
.trail { fill: none; stroke: #f3f2ec; stroke-opacity: .75; stroke-width: 7; }
.block-edge { fill: none; stroke: #d5d1c8; stroke-width: 18; }
.block { fill: none; stroke: #f7f6f2; stroke-width: 13; }

/* roads and water */
.line { fill: none; stroke-linejoin: round; stroke-linecap: round; }
.street-edge, .avenue-edge, .trunk-edge, .country-edge, .bank-edge { stroke: #cbc8c3; }
.street, .avenue, .trunk, .country { stroke: #fff; }
.street-edge { stroke-width: 17; }
.street { stroke-width: 12; }
.avenue-edge { stroke-width: 27; }
.avenue { stroke-width: 22; }
.trunk-edge { stroke-width: 36; }
.trunk { stroke-width: 31; }
.country-edge { stroke-width: 13; }
.country { stroke-width: 8; }
.bank-edge { stroke-width: 66; }
.bank { stroke: #f0ede5; stroke-width: 60; }
.shore { stroke: #9fd099; stroke-width: 27; }
.river { stroke: #9ab7cf; stroke-width: 19; }
.street-lot { fill: none; stroke: #fff; stroke-width: 9; }
.roundabout { fill: #f2efe9; stroke: #fff; stroke-width: 9; }
.bridge { stroke: #d4d4d4; stroke-width: 10; }
.bridge-deck { stroke: #d6d6d6; stroke-width: 30; }
.overpass { stroke: #d4d4d4; stroke-width: 52; }
.ramp-edge { stroke: #d5cf9e; stroke-width: 13; }
.ramp { stroke: #fff9c4; stroke-width: 9; }
.county-edge, .branch-edge { stroke: #dbd6a8; }
.county, .branch { stroke: #fffac8; }
.county-edge { stroke-width: 44; }
.county { stroke-width: 39; }
.branch-edge { stroke-width: 27; }
.branch { stroke-width: 22; }
.national-edge { stroke: #dcc37a; stroke-width: 49; }
.national { stroke: #ffe58f; stroke-width: 43; }
.national-mark { fill: #fbc02d; }
.highway-edge { stroke: #cf8a49; stroke-width: 43; }
.highway { stroke: #ffa44c; stroke-width: 38; }

/* map text */
.label {
  font: 500 34px "Noto Sans CJK KR", sans-serif;
  text-anchor: middle;
  paint-order: stroke;
  stroke: #fff;
  stroke-opacity: .85;
  stroke-width: 7px;
  stroke-linejoin: round;
}
.estate-name { fill: #6a594b; }
.school-name { fill: #45678a; }
.poi-name { fill: #3d3d3d; }
.watermark { font: 300 92px "Noto Sans CJK KR", sans-serif; text-anchor: middle; fill: #888; fill-opacity: .55; }
.poi-icon { fill: #505050; }
.office { fill: #fff; stroke: #333; stroke-width: 4; }
.won { font: 700 32px "Noto Sans CJK KR", sans-serif; text-anchor: middle; }
.school-icon { fill: #3d5878; }
.road-name { font: 500 27px "Noto Sans CJK KR", sans-serif; }
.on-highway { fill: #8a4a12; }
.on-national { fill: #94782a; }
.on-county { fill: #a39b4c; }
.on-river { fill: #4a7fa5; }
.on-bridge { fill: #55708a; }
.shield-body { fill: #5277ee; stroke: #fff; stroke-width: 3; }
.shield-top { fill: #d9180c; }
.shield text { font: 700 25px "Liberation Sans", sans-serif; text-anchor: middle; fill: #fff; }
.pin { fill: #1e88fb; }
.pin-base { fill: #3b5f8c; }
.pin-text { font: 700 52px Inter, sans-serif; text-anchor: middle; fill: #fff; }
.tip-box { fill: #fff; stroke: #8a8a8a; stroke-width: 4; }
.tip-text { font: 500 32px "Noto Sans CJK KR", sans-serif; text-anchor: middle; fill: #222; }
```
